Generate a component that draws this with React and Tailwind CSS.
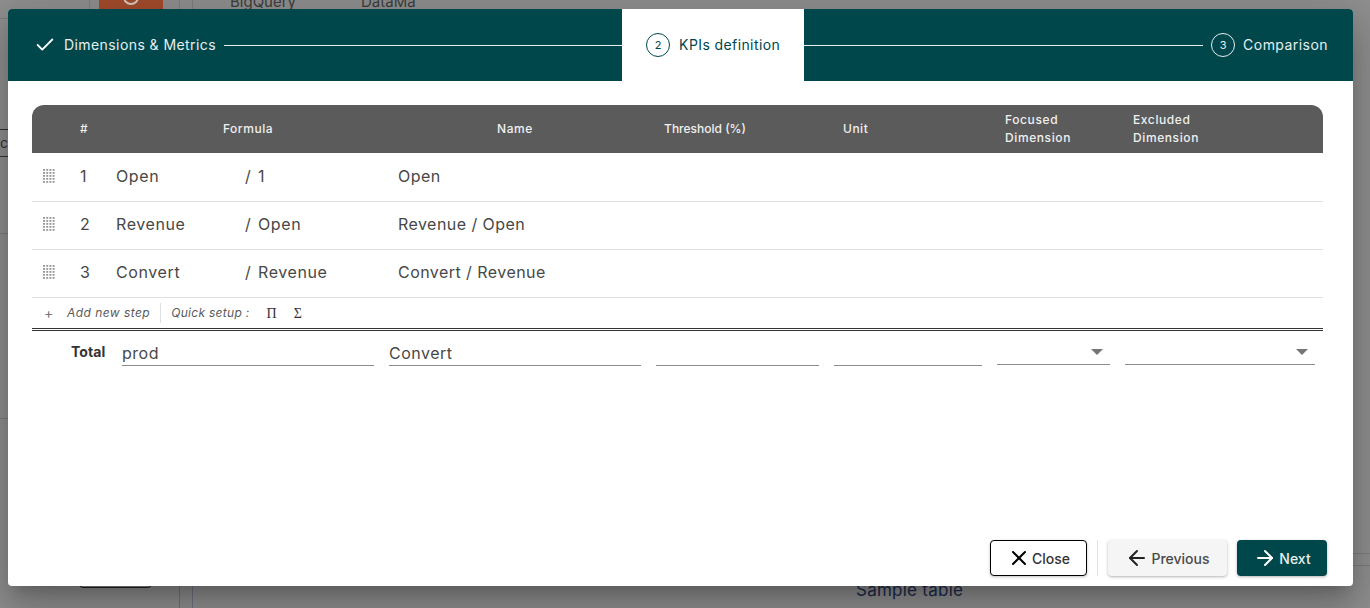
import React from "react";
import { X, ArrowLeft, ArrowRight, Check } from "lucide-react";

function Grip() {
  return (
    <svg width="12" height="14" viewBox="0 0 12 14" className="fill-[#9a9a9a]">
      {[0, 3, 6, 9, 12].map((y) =>
        [0, 3.2, 6.4, 9.6].map((x) => <rect key={`${x}-${y}`} x={x} y={y} width="2" height="1.8" />)
      )}
    </svg>
  );
}

function Row({ n, a, b, name }) {
  return (
    <div className="flex h-12 items-center border-b border-[#e0e0e0] pb-[3px] text-[16px] tracking-[0.6px] text-[#484848]">
      <div className="flex w-[32px] justify-center pl-[1px]"><Grip /></div>
      <div className="w-[52px] pl-[16px] tracking-normal">{n}</div>
      <div className="w-[129px]">{a}</div>
      <div className="flex w-[153px]"><span className="w-[13px]">/</span><span>{b}</span></div>
      <div className="tracking-[0.45px]">{name}</div>
    </div>
  );
}

function Field({ w, children, arrow, ml, up }) {
  return (
    <div className={`relative flex h-[24px] items-center border-b border-[#8c8c8c] pb-[2px] text-[16px] tracking-[0.5px] text-[#484848] ${w} ${ml} ${up}`}>
      {children}
      {arrow && <span className="absolute right-[7px] top-[8px] h-0 w-0 border-x-[6px] border-t-[6px] border-x-transparent border-t-[#757575]" />}
    </div>
  );
}

export default function App() {
  return (
    <div className="relative h-[608px] w-[1370px] overflow-hidden bg-[#8f8f8f] font-['Inter','Liberation_Sans',sans-serif]">
      {/* dimmed page behind */}
      <div className="absolute left-[99px] top-0 flex h-[9px] w-[64px] justify-center overflow-hidden bg-[#a34b2c]">
        <span className="mt-[-11px] h-[16px] w-[16px] rounded-full border-2 border-[#d9c9c0]" />
      </div>
      <div className="absolute left-[89px] top-0 h-[9px] w-px bg-[#7d7d7d]" />
      <div className="absolute left-[179px] top-0 h-[9px] w-[14px] border-x border-[#7d7d7d]" />
      <div className="absolute left-0 top-[18px] h-px w-[8px] bg-[#7d7d7d]" />
      <div className="absolute left-0 top-[233px] h-px w-[8px] bg-[#7d7d7d]" />
      <div className="absolute left-0 top-[418px] h-px w-[8px] bg-[#7d7d7d]" />
      <div className="absolute left-[1353px] top-[553px] h-[13px] w-[17px] border-y border-[#7d7d7d]" />
      <div className="absolute left-[230px] top-[-9px] text-[15px] text-[#3c3c3c]">BigQuery</div>
      <div className="absolute left-[361px] top-[-9px] text-[15px] text-[#3c3c3c]">DataMa</div>
      <div className="absolute left-[856px] top-[578px] text-[17px] tracking-[0.25px] text-[#1d2a4d]">Sample table</div>
      <div className="absolute left-[79px] top-[580px] h-[8px] w-[73px] rounded-b border border-[#222]" />
      <div className="absolute left-[179px] top-[586px] h-[22px] w-[14px] border-x border-[#6f7480]" />
      <div className="absolute left-0 top-[129px] h-[28px] w-[8px] overflow-hidden border-y border-[#333] text-[14px] leading-[26px] text-[#333]"><span className="block w-[8px] whitespace-nowrap">ce</span></div>

      {/* modal */}
      <div className="absolute left-[8px] top-[9px] flex h-[577px] w-[1345px] flex-col overflow-hidden rounded-[4px] bg-white shadow-[0_11px_15px_-7px_rgba(0,0,0,0.2),0_24px_38px_3px_rgba(0,0,0,0.14),0_9px_46px_8px_rgba(0,0,0,0.12)]">
        {/* stepper */}
        <div className="flex h-[72px] shrink-0 items-center bg-[#00474c] text-[14px] text-[#e6efef]">
          <Check className="ml-[26px] h-[22px] w-[22px] text-white" strokeWidth={2} />
          <span className="mb-[2px] ml-[8px] tracking-[0.42px]">Dimensions &amp; Metrics</span>
          <div className="ml-[8px] h-px flex-1 bg-[#e6efef]" />
          <div className="flex h-full w-[182px] items-center bg-white pl-[24px] text-[#00474c]">
            <span className="flex h-[24px] w-[24px] items-center justify-center rounded-full border border-[#00474c] text-[11px]">2</span>
            <span className="mb-[2px] ml-[9px] tracking-[0.4px]">KPIs definition</span>
          </div>
          <div className="h-px w-[399px] bg-[#e6efef]" />
          <span className="ml-[8px] flex h-[24px] w-[24px] items-center justify-center rounded-full border border-[#e6efef] text-[11px]">3</span>
          <span className="mb-[2px] ml-[8px] mr-[25px] tracking-[0.45px]">Comparison</span>
        </div>

        {/* body */}
        <div className="ml-[24px] mr-[30px] mt-[24px] flex-1">
          <div className="flex h-[48px] items-center rounded-t-[12px] bg-[#5b5b5b] text-[12px] font-medium leading-[18px] text-[#f0f0f0]">
            <div className="w-[84px] pl-[48px]">#</div>
            <div className="w-[264px] text-center tracking-[0.55px]">Formula</div>
            <div className="w-[270px] text-center tracking-[0.6px]">Name</div>
            <div className="w-[110px] text-center">Threshold (%)</div>
            <div className="w-[245px] pl-[83px] tracking-[0.5px]">Unit</div>
            <div className="w-[128px] tracking-[0.6px]">Focused<br />Dimension</div>
            <div className="tracking-[0.6px]">Excluded<br />Dimension</div>
          </div>
          <div className="mt-px">
            <Row n="1" a="Open" b="1" name="Open" />
            <Row n="2" a="Revenue" b="Open" name="Revenue / Open" />
            <Row n="3" a="Convert" b="Revenue" name="Convert / Revenue" />
          </div>
          <div className="flex h-[33px] items-center border-b-[3px] border-double border-[#333] text-[12px] italic text-[#5a5a5a]">
            <span className="ml-[12px] w-[23px] text-[14px] not-italic leading-none text-[#777]">+</span>
            <span className="tracking-[0.45px]">Add new step</span>
            <span className="ml-[10px] h-[20px] w-px bg-[#e0e0e0]" />
            <span className="ml-[10px] tracking-[0.3px]">Quick setup :</span>
            <span className="ml-[17px] font-['Liberation_Serif',serif] text-[14px] not-italic text-[#333]">Π</span>
            <span className="ml-[17px] font-['Liberation_Serif',serif] text-[14px] not-italic text-[#333]">Σ</span>
          </div>
          <div className="mt-[10px] flex items-end">
            <div className="mb-[4px] ml-[39px] w-[51px] text-[14px] font-bold tracking-[0.1px] text-[#333]">Total</div>
            <Field w="w-[252px]">prod</Field>
            <Field w="w-[252px]" ml="ml-[15px]">Convert</Field>
            <Field w="w-[163px]" ml="ml-[15px]" />
            <Field w="w-[148px]" ml="ml-[15px]" />
            <Field w="w-[113px]" ml="ml-[15px]" up="mb-px" arrow />
            <Field w="w-[190px]" ml="ml-[15px]" up="mb-px" arrow />
          </div>
        </div>

        {/* footer */}
        <div className="mb-[10px] mr-[26px] flex h-[36px] shrink-0 items-center justify-end text-[14px]">
          <button className="flex h-[36px] w-[97px] items-center justify-center gap-[1px] rounded-[4px] border border-black bg-white font-medium text-[#333] shadow-[0_1px_3px_rgba(0,0,0,0.25)]">
            <X className="h-[24px] w-[24px] text-black" strokeWidth={2} />Close
          </button>
          <span className="ml-[10px] h-[36px] w-px bg-[#e0e0e0]" />
          <button className="ml-[10px] flex h-[36px] w-[119px] items-center justify-center gap-[2px] rounded-[4px] bg-[#f5f5f5] font-medium text-[#4a4a4a] shadow-[0_1px_3px_rgba(0,0,0,0.3)]">
            <ArrowLeft className="h-[24px] w-[24px] text-[#222]" strokeWidth={2} />Previous
          </button>
          <button className="ml-[10px] flex h-[36px] w-[90px] items-center justify-center gap-[2px] rounded-[4px] bg-[#00474c] font-medium text-[#e6efef] shadow-[0_1px_3px_rgba(0,0,0,0.3)]">
            <ArrowRight className="h-[24px] w-[24px] text-white" strokeWidth={2} />Next
          </button>
        </div>
      </div>
    </div>
  );
}
